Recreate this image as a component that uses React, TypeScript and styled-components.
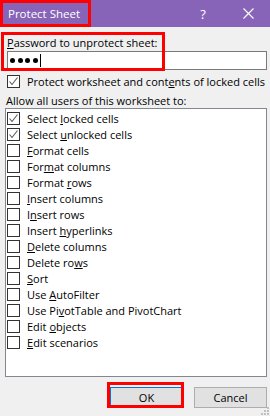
import React, { FC } from "react";
import styled, { createGlobalStyle } from "styled-components";

const GlobalStyle = createGlobalStyle`
    html, body {
        margin: 0;
        padding: 0;
        background: #f0f0f0;
    }
    body {
        font-family: "Open Sans", "Noto Sans", sans-serif;
        font-size: 11px;
        color: #000;
    }
`;

const Dialog = styled.div`
    width: 270px;
    height: 416px;
    display: flex;
    flex-direction: column;
    background: #f0f0f0;
    position: relative;
    overflow: hidden;
`;

const TitleBar = styled.div`
    height: 27px;
    display: flex;
    align-items: stretch;
    background: #8764b8;
    color: #fff;
`;

const Title = styled.div`
    width: 91px;
    box-sizing: border-box;
    border: 3px solid #ff0000;
    padding-left: 5px;
    display: flex;
    align-items: center;
    font-size: 11.5px;
`;

const TitleButton = styled.div<{ $width: number }>`
    width: ${(p) => p.$width}px;
    display: flex;
    align-items: center;
    justify-content: center;
    font-size: 13px;
`;

const Spacer = styled.div`
    flex: 1;
`;

const Body = styled.div`
    width: 262px;
    display: flex;
    flex-direction: column;
    padding: 5px 3px 0 5px;
`;

const PasswordBlock = styled.div`
    position: relative;
    display: flex;
    flex-direction: column;
    padding: 3px 0 1px 2px;
`;

const Highlight = styled.div<{ $top: number; $left: number; $width: number; $height: number }>`
    position: absolute;
    top: ${(p) => p.$top}px;
    left: ${(p) => p.$left}px;
    width: ${(p) => p.$width}px;
    height: ${(p) => p.$height}px;
    box-sizing: border-box;
    border: 3px solid #ff0000;
    pointer-events: none;
`;

const Label = styled.div`
    height: 16px;
    line-height: 16px;
    white-space: nowrap;
`;

const PasswordInput = styled.div`
    height: 19px;
    box-sizing: border-box;
    background: #fff;
    border: 1px solid #7a7a7a;
    display: flex;
    align-items: center;
    gap: 1px;
    padding-left: 2px;
`;

const Dot = styled.span`
    width: 5px;
    height: 5px;
    border-radius: 50%;
    background: #000;
    margin-right: 1.5px;
`;

const Caret = styled.span`
    width: 1px;
    height: 13px;
    background: #000;
`;

const CheckRow = styled.div<{ $indent?: number; $top?: number }>`
    display: flex;
    align-items: center;
    gap: 7px;
    height: 16px;
    margin-top: ${(p) => p.$top ?? 0}px;
    padding-left: ${(p) => p.$indent ?? 0}px;
    white-space: nowrap;
`;

const ListBox = styled.div`
    height: 269px;
    box-sizing: border-box;
    background: #fff;
    border: 1px solid #828790;
    padding: 1px 1px;
    display: flex;
    flex-direction: column;
`;

const Box = styled.span`
    width: 13px;
    height: 13px;
    box-sizing: border-box;
    border: 1px solid #333;
    background: #fff;
    display: flex;
    align-items: center;
    justify-content: center;
    flex: none;
`;

const ButtonRow = styled.div`
    display: flex;
    justify-content: flex-end;
    align-items: center;
    gap: 11px;
    padding: 10px 0 0 0;
`;

const ButtonWrap = styled.div`
    position: relative;
    display: flex;
`;

const Button = styled.div<{ $default?: boolean }>`
    width: 73px;
    height: 21px;
    box-sizing: border-box;
    background: #e1e1e1;
    border: 1px solid ${(p) => (p.$default ? "#0078d7" : "#adadad")};
    display: flex;
    align-items: center;
    justify-content: center;
    flex: none;
`;

const Grip = styled.svg`
    position: absolute;
    right: 1px;
    bottom: 1px;
`;

const Check: FC<{ checked?: boolean }> = ({ checked }) => (
    <Box>
        {checked && (
            <svg width="11" height="11" viewBox="0 0 11 11">
                <path d="M1.5 5.5 L4 8.5 L9.5 1.5" fill="none" stroke="#5a5a5a" strokeWidth="1.1" />
            </svg>
        )}
    </Box>
);

// text with an underlined access key
const Key: FC<{ text: string; k: number }> = ({ text, k }) => (
    <span>
        {text.slice(0, k)}
        <u>{text[k]}</u>
        {text.slice(k + 1)}
    </span>
);

const permissions: { text: string; k: number; checked?: boolean }[] = [
    { text: "Select locked cells", k: 7, checked: true },
    { text: "Select unlocked cells", k: 7, checked: true },
    { text: "Format cells", k: 0 },
    { text: "Format columns", k: 3 },
    { text: "Format rows", k: 7 },
    { text: "Insert columns", k: 0 },
    { text: "Insert rows", k: 1 },
    { text: "Insert hyperlinks", k: 7 },
    { text: "Delete columns", k: 0 },
    { text: "Delete rows", k: 9 },
    { text: "Sort", k: 0 },
    { text: "Use AutoFilter", k: 4 },
    { text: "Use PivotTable and PivotChart", k: 6 },
    { text: "Edit objects", k: 5 },
    { text: "Edit scenarios", k: 0 },
];

export default function App() {
    return (
        <>
            <GlobalStyle />
            <Dialog>
                <TitleBar>
                    <Title>Protect Sheet</Title>
                    <Spacer />
                    <TitleButton $width={46}>?</TitleButton>
                    <TitleButton $width={44}>
                        <svg width="11" height="11" viewBox="0 0 11 11">
                            <path d="M0.5 0.5 L10.5 10.5 M10.5 0.5 L0.5 10.5" stroke="#fff" strokeWidth="1.1" />
                        </svg>
                    </TitleButton>
                </TitleBar>
                <Body>
                    <PasswordBlock>
                        <Label>
                            <Key text="Password to unprotect sheet:" k={0} />
                        </Label>
                        <PasswordInput>
                            <Dot />
                            <Dot />
                            <Dot />
                            <Dot />
                            <Caret />
                        </PasswordInput>
                        <Highlight $top={0} $left={-4} $width={164} $height={39} />
                    </PasswordBlock>
                    <CheckRow $top={2} $indent={2}>
                        <Check checked />
                        <Key text="Protect worksheet and contents of locked cells" k={26} />
                    </CheckRow>
                    <CheckRow $top={3} $indent={1}>
                        Allow all users of this worksheet to:
                    </CheckRow>
                    <ListBox>
                        {permissions.map((p) => (
                            <CheckRow key={p.text}>
                                <Check checked={p.checked} />
                                <Key text={p.text} k={p.k} />
                            </CheckRow>
                        ))}
                    </ListBox>
                    <ButtonRow>
                        <ButtonWrap>
                            <Button $default>OK</Button>
                            <Highlight $top={-5} $left={-3} $width={77} $height={26} />
                        </ButtonWrap>
                        <Button>Cancel</Button>
                    </ButtonRow>
                </Body>
                <Grip width="8" height="8" viewBox="0 0 8 8">
                    <rect x="6" y="0" width="2" height="2" fill="#c0c0c0" />
                    <rect x="3" y="3" width="2" height="2" fill="#c0c0c0" />
                    <rect x="6" y="3" width="2" height="2" fill="#c0c0c0" />
                    <rect x="0" y="6" width="2" height="2" fill="#c0c0c0" />
                    <rect x="3" y="6" width="2" height="2" fill="#c0c0c0" />
                    <rect x="6" y="6" width="2" height="2" fill="#c0c0c0" />
                </Grip>
            </Dialog>
        </>
    );
}
